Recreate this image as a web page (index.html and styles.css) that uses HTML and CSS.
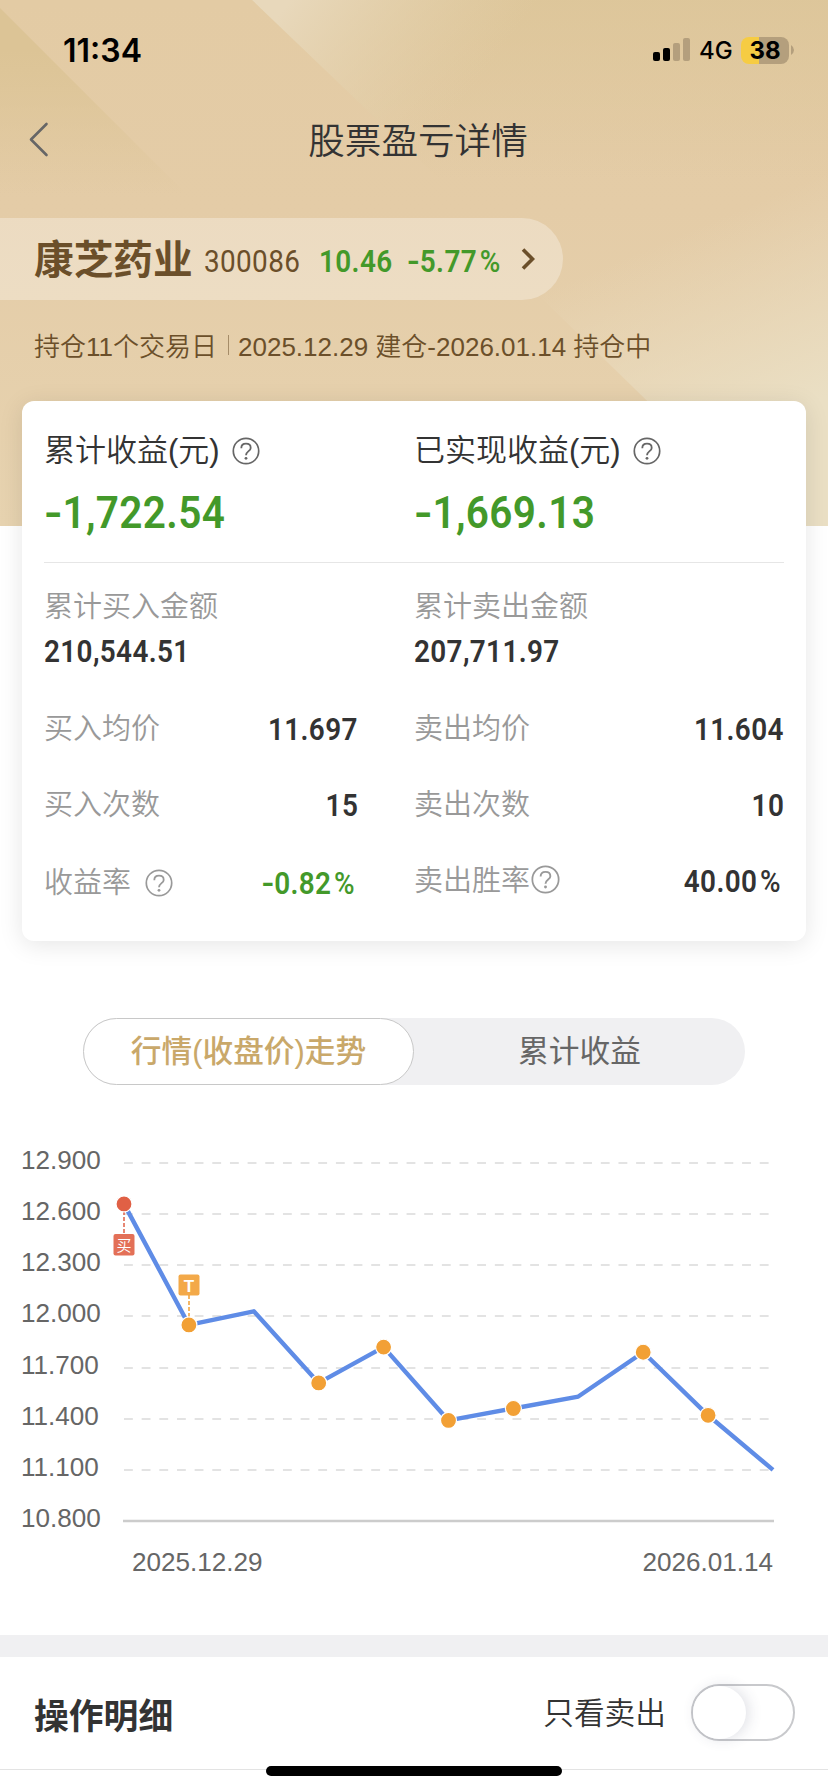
FILE: index.html
```html
<!DOCTYPE html>
<html lang="zh-Hans">
<head>
	<meta charset="UTF-8">
	<title>股票盈亏详情</title>
	<link rel="stylesheet" href="styles.css">
</head>
<body>

	<div class="header">
		<svg class="header-bg" width="828" height="526" viewBox="0 0 828 526">
			<defs>
				<linearGradient id="bg-left" gradientUnits="userSpaceOnUse" x1="0" y1="50" x2="0" y2="195">
					<stop offset="0" stop-color="#dcc496"/>
					<stop offset="1" stop-color="#dcc496" stop-opacity="0"/>
				</linearGradient>
				<linearGradient id="bg-top" gradientUnits="userSpaceOnUse" x1="290" y1="0" x2="450" y2="120">
					<stop offset="0" stop-color="#e8d8bb"/>
					<stop offset="1" stop-color="#e4d0ab" stop-opacity="0"/>
				</linearGradient>
				<linearGradient id="bg-right" gradientUnits="userSpaceOnUse" x1="560" y1="285" x2="640" y2="475">
					<stop offset="0" stop-color="#eadcc0" stop-opacity="0"/>
					<stop offset="1" stop-color="#eadfc4"/>
				</linearGradient>
				<linearGradient id="bg-shade" gradientUnits="userSpaceOnUse" x1="0" y1="0" x2="0" y2="180">
					<stop offset="0" stop-color="#dcc598"/>
					<stop offset="1" stop-color="#dcc598" stop-opacity="0"/>
				</linearGradient>
			</defs>
			<path d="M252 0H828V180H440z" fill="url(#bg-shade)" opacity=".8"/>
			<path d="M0 8L190 198H0z" fill="url(#bg-left)"/>
			<path d="M252 0H828V180H440z" fill="url(#bg-top)"/>
			<path d="M500 258L828 120V526H776z" fill="url(#bg-right)"/>
		</svg>

		<div class="status-bar">
			<div class="time">11:34</div>
			<div class="status-right">
				<svg width="38" height="24" viewBox="0 0 38 24">
					<rect x="0" y="14" width="7" height="9" rx="2"/>
					<rect x="10" y="10" width="7" height="13" rx="2"/>
					<rect x="20" y="5" width="7" height="18" rx="2" fill="#b49f7d"/>
					<rect x="30" y="0" width="7" height="23" rx="2" fill="#b49f7d"/>
				</svg>
				<span class="net">4G</span>
				<span class="battery">38</span>
				<svg class="battery-cap" width="3" height="10" viewBox="0 0 3 10"><path d="M0 0Q3 2 3 5T0 10z" fill="#b49f7d"/></svg>
			</div>
		</div>

		<div class="nav-bar">
			<svg class="back" width="22" height="36" viewBox="0 0 22 36"><path d="M18.500 3L3 18.500L18.500 34" fill="none" stroke="#666" stroke-width="2.600" stroke-linecap="round" stroke-linejoin="round"/></svg>
			<div class="nav-title">股票盈亏详情</div>
		</div>

		<div class="stock">
			<span class="stock-name">康芝药业</span>
			<span class="stock-code"><b class="din">300086</b></span>
			<span class="stock-price"><b class="din">10.46</b></span>
			<span class="stock-rate"><b class="din"><em>-</em>5.77<i>%</i></b></span>
			<svg width="14" height="22" viewBox="0 0 14 22"><path d="M2 1.500L11.500 11L2 20.500" fill="none" stroke="#6b4f2a" stroke-width="3.600"/></svg>
		</div>

		<div class="hold">
			<span>持仓11个交易日</span>
			<span class="hold-line"></span>
			<span>2025.12.29 建仓-2026.01.14 持仓中</span>
		</div>
	</div>

	<div class="card">
		<div class="card-top">
			<div class="total">
				<div class="total-name">累计收益(元)<svg class="help" viewBox="0 0 28 28"><use href="#help"/></svg></div>
				<div class="total-num din"><em>-</em>1,722.54</div>
			</div>
			<div class="total">
				<div class="total-name">已实现收益(元)<svg class="help" viewBox="0 0 28 28"><use href="#help"/></svg></div>
				<div class="total-num din"><em>-</em>1,669.13</div>
			</div>
		</div>
		<div class="card-body">
			<div class="col">
				<div class="label">累计买入金额</div>
				<div class="num din">210,544.51</div>
				<div class="line first">
					<span class="label">买入均价</span>
					<span class="num din right">11.697</span>
				</div>
				<div class="line">
					<span class="label">买入次数</span>
					<span class="num din right">15</span>
				</div>
				<div class="line rate">
					<span class="label">收益率<svg class="help" viewBox="0 0 28 28"><use href="#help"/></svg></span>
					<span class="num din right green"><em>-</em>0.82<i>%</i></span>
				</div>
			</div>
			<div class="col">
				<div class="label">累计卖出金额</div>
				<div class="num din">207,711.97</div>
				<div class="line first">
					<span class="label">卖出均价</span>
					<span class="num din right">11.604</span>
				</div>
				<div class="line">
					<span class="label">卖出次数</span>
					<span class="num din right">10</span>
				</div>
				<div class="line win">
					<span class="label">卖出胜率<svg class="help" viewBox="0 0 28 28"><use href="#help"/></svg></span>
					<span class="num din right">40.00<i>%</i></span>
				</div>
			</div>
		</div>
	</div>

	<div class="tabs">
		<div class="tab actived">行情(收盘价)走势</div>
		<div class="tab">累计收益</div>
	</div>

	<svg class="chart" id="chart" width="828" height="550" viewBox="0 0 828 550"></svg>

	<div class="detail">
		<div class="detail-title">操作明细</div>
		<div class="detail-name">只看卖出</div>
		<div class="switch"><div class="switch-dot"></div></div>
	</div>
	<div class="home-bar"></div>

	<svg width="0" height="0" class="defs">
		<symbol id="help" viewBox="0 0 28 28">
			<circle cx="14" cy="14" r="12.700" fill="none" stroke="currentColor" stroke-width="1.700"/>
			<path d="M9.300 11.200C9.300 8.300 11.300 6.700 14 6.700S18.700 8.300 18.700 10.900C18.700 14 14 14.300 14 18.200" fill="none" stroke="currentColor" stroke-width="1.800"/>
			<circle cx="14" cy="21.300" r="1.400" fill="currentColor"/>
		</symbol>
	</svg>

	<script>
		// 收盘价, mark: 当日是否有交易
		const prices = [
			{price: 12.66, mark: 'buy'},
			{price: 11.95, mark: 't'},
			{price: 12.03},
			{price: 11.61, mark: 't'},
			{price: 11.82, mark: 't'},
			{price: 11.39, mark: 't'},
			{price: 11.46, mark: 't'},
			{price: 11.53},
			{price: 11.79, mark: 't'},
			{price: 11.42, mark: 't'},
			{price: 11.10}
		];
		const LEFT = 124, RIGHT = 773, TOP = 78, BOTTOM = 436;

		function getX(i) {
			return LEFT + (RIGHT - LEFT) * i / (prices.length - 1);
		}

		function getY(price) {
			return BOTTOM - (price - 10.8) / 2.1 * (BOTTOM - TOP);
		}

		function drawChart() {
			var str = '';
			for (var i = 0; i < 8; i++) {
				var y = Math.round(TOP + (BOTTOM - TOP) * i / 7);
				str += '<text class="axis-text" x="21" y="' + (y + 6) + '">' + (12.9 - i * 0.3).toFixed(3) + '</text>';
				if (i < 7) {
					str += '<line class="grid" x1="124" x2="770" y1="' + y + '" y2="' + y + '"/>';
				}
			}
			str += '<line class="axis" x1="123" x2="774" y1="436" y2="436"/>';
			str += '<text class="axis-text" x="132" y="486">2025.12.29</text>';
			str += '<text class="axis-text" x="773" y="486" text-anchor="end">2026.01.14</text>';

			var points = prices.map(function (item, i) {
				return getX(i) + ',' + getY(item.price);
			}).join(' ');
			str += '<polyline class="price-line" points="' + points + '"/>';

			// 买卖标记
			str += '<line class="flag-line buy" x1="124" x2="124" y1="126" y2="150"/>';
			str += '<rect class="flag buy" x="113.500" y="149" width="21" height="21.500" rx="2"/>';
			str += '<text class="flag-text" x="124" y="165.500">买</text>';
			str += '<line class="flag-line t" x1="189" x2="189" y1="210" y2="233"/>';
			str += '<rect class="flag t" x="178.500" y="189.500" width="21" height="21" rx="2"/>';
			str += '<text class="flag-text t-text" x="189" y="206.500">T</text>';

			prices.forEach(function (item, i) {
				if (item.mark) {
					str += '<circle class="dot ' + item.mark + '" cx="' + getX(i) + '" cy="' + getY(item.price) + '" r="8"/>';
				}
			});
			document.querySelector('#chart').innerHTML = str;
		}

		drawChart();
	</script>
</body>
</html>
```
FILE: styles.css
```css
*{
	margin: 0;
	padding: 0;
	box-sizing: border-box;
}
body{
	width: 828px;
	height: 1792px;
	overflow: hidden;
	background-color: #fff;
	font-family: "Liberation Sans", "Noto Sans CJK SC", sans-serif;
	font-weight: 350;
	color: #333;
}
i,
em{
	font-style: normal;
}
.header{
	position: relative;
	height: 526px;
	background: linear-gradient(#e3cba4, #e4cca7 40%, #e7d3b0);
}
.header-bg{
	position: absolute;
	left: 0;
	top: 0;
}
.status-bar{
	position: relative;
	height: 100px;
	padding: 0 34px 0 63px;
	display: flex;
	align-items: center;
	justify-content: space-between;
	font-family: Inter, sans-serif;
	color: #000;
}
.time{
	font-size: 32px;
	font-weight: 600;
}
.status-right{
	display: flex;
	align-items: center;
}
.net{
	margin-left: 8px;
	width: 34px;
	font-size: 24px;
	font-weight: 500;
	line-height: 27px;
	padding-top: 1px;
}
.battery{
	margin-left: 8px;
	width: 48px;
	height: 27px;
	border-radius: 8px;
	background: linear-gradient(90deg, #f6cc43 18px, #b49f7d 18px);
	font-size: 24px;
	font-weight: 700;
	line-height: 27px;
	text-align: center;
}
.battery-cap{
	margin-left: 2px;
}
.nav-bar{
	position: relative;
	height: 80px;
	padding: 0 0 4px 8px;
	display: flex;
	align-items: center;
	justify-content: center;
}
.back{
	position: absolute;
	left: 28px;
	top: 21px;
}
.nav-title{
	font-size: 36.6px;
}
.stock{
	position: relative;
	margin-top: 38px;
	width: 563px;
	height: 82px;
	padding-left: 34px;
	border-radius: 0 41px 41px 0;
	background-color: rgba(255, 255, 255, .3);
	display: flex;
	align-items: center;
	color: #6b4f2a;
	white-space: nowrap;
}
.stock-name{
	width: 170px;
	padding-bottom: 6px;
	font-size: 39.7px;
	font-weight: 700;
}
/* 数字压窄 */
.din{
	display: inline-block;
	font-family: Roboto, sans-serif;
	font-size: 31px;
	font-weight: 600;
	letter-spacing: .4px;
	transform: scaleX(.9);
	transform-origin: left center;
}
.din.right{
	transform-origin: right center;
}
.din i{
	margin-left: 3px;
	font-weight: 500;
}
/* 负号加宽 */
.din em{
	display: inline-block;
	margin-right: .08em;
	transform: scaleX(1.25);
	transform-origin: left center;
}
.stock-code,
.stock-price,
.stock-rate{
	padding-top: 4px;
}
.stock-code{
	width: 115px;
}
.stock-code .din{
	font-weight: 400;
}
.stock-price,
.stock-rate{
	color: #43992a;
}
.stock-price{
	width: 88px;
}
.stock-rate{
	width: 114px;
}
.hold{
	position: relative;
	height: 89px;
	padding-left: 34px;
	display: flex;
	align-items: center;
	font-size: 26px;
	color: #6b4f2a;
	white-space: nowrap;
}
.hold-line{
	width: 1px;
	height: 20px;
	margin: 0 9px 0 11px;
	background-color: #a58c68;
}
.card{
	position: relative;
	width: 784px;
	height: 540px;
	margin: -125px 22px 0;
	padding: 0 22px;
	border-radius: 12px;
	background-color: #fff;
	box-shadow: 0 4px 24px rgba(0, 0, 0, .1);
}
.card-top,
.card-body{
	display: grid;
	grid-template-columns: 314px 370px;
	column-gap: 56px;
}
.card-top{
	height: 162px;
	padding-top: 26px;
	border-bottom: 1px solid #e6e6e6;
}
.total-name{
	height: 40px;
	display: flex;
	align-items: center;
	font-size: 31px;
}
.help{
	width: 28px;
	height: 28px;
	color: #666;
	margin: 7px 0 0 12px;
}
.total-num{
	margin-top: 21px;
	line-height: 50px;
	font-size: 45px;
	color: #43992a;
}
.card-body{
	padding-top: 21px;
}
.label{
	height: 40px;
	display: flex;
	align-items: center;
	font-size: 29px;
	color: #999;
}
.label .help{
	margin: 5px 0 0 14px;
	color: #999;
}
.num{
	line-height: 40px;
	margin-top: 8px;
}
.green{
	color: #43992a;
}
.line{
	height: 76px;
	display: flex;
	align-items: center;
	justify-content: space-between;
}
.line .num{
	margin-top: 8px;
}
.line.first{
	margin-top: 16px;
}
.line.rate{
	margin-top: 2px;
	padding-right: 3px;
}
.line.win{
	padding-right: 3px;
}
.line.win .help{
	margin: 2px 0 0 1px;
	width: 29px;
	height: 29px;
}
.tabs{
	width: 662px;
	height: 67px;
	margin: 77px 0 0 83px;
	display: flex;
	border-radius: 34px;
	background-color: #f0f0f2;
}
.tab{
	width: 331px;
	height: 67px;
	line-height: 67px;
	text-align: center;
	font-size: 30.7px;
	font-weight: 400;
	color: #666;
}
.tab.actived{
	line-height: 66px;
	font-weight: 500;
	color: #c9a86a;
	background-color: #fff;
	border: 1px solid #c8c8c8;
	border-radius: 34px;
}
.chart{
	display: block;
}
.axis-text{
	font-size: 26.1px;
	fill: #666;
}
.grid{
	stroke: #e3e3e3;
	stroke-width: 2;
	stroke-dasharray: 8.83 8.83;
}
.axis{
	stroke: #ccc;
	stroke-width: 2.4;
}
.price-line{
	fill: none;
	stroke: #5f8ce6;
	stroke-width: 4.4;
	stroke-linejoin: round;
}
.dot{
	stroke: #fff;
	stroke-width: 1.2;
}
.dot.buy,
.flag.buy{
	fill: #e06045;
}
.dot.t,
.flag.t{
	fill: #f2a035;
}
.flag{
	opacity: .9;
}
.flag-line{
	stroke-width: 1.5;
	stroke-dasharray: 4 2;
}
.flag-line.buy{
	stroke: #e06045;
}
.flag-line.t{
	stroke: #f2a035;
}
.flag-text{
	font-size: 15px;
	text-anchor: middle;
	fill: #fff;
}
.t-text{
	font-size: 17px;
	font-weight: 700;
}
.detail{
	height: 135px;
	padding: 0 33px 0 34px;
	border-top: 22px solid #f0f0f2;
	border-bottom: 1px solid #e3e3e3;
	display: flex;
	align-items: center;
}
.detail-title{
	flex: 1;
	padding-top: 2px;
	font-size: 34.8px;
	font-weight: 700;
}
.detail-name{
	padding-bottom: 5px;
	font-size: 30.7px;
}
.switch{
	width: 104px;
	height: 57px;
	margin: 0 0 2px 25px;
	border: 2px solid #c8c9cc;
	border-radius: 29px;
}
.switch-dot{
	width: 53px;
	height: 53px;
	border-radius: 50%;
	background-color: #fff;
	box-shadow: 3px 0 14px rgba(60, 70, 100, .16);
}
.home-bar{
	position: absolute;
	left: 266px;
	top: 1766px;
	width: 296px;
	height: 10px;
	border-radius: 5px;
	background-color: #000;
}
.defs{
	display: block;
}
```
